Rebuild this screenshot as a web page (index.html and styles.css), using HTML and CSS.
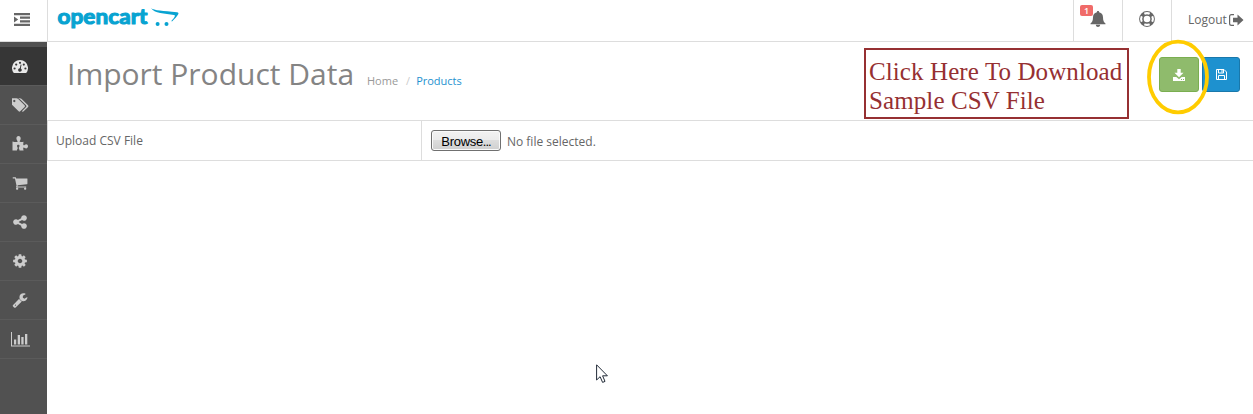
FILE: index.html
```
<!DOCTYPE html>
<html lang="en">
<head>
<meta charset="utf-8">
<title>Import Product Data</title>
<link rel="stylesheet" href="styles.css">
</head>
<body>
<header class="topbar">
  <div class="toggle">
    <svg width="16" height="13" viewBox="0 0 16 13"><path d="M0 0h16v2.300H0zM6 3.600h10v2.200H6zM6 7.200h10v2.200H6zM0 10.700h16V13H0zM0 3.400l4.200 3.100L0 9.600z"/></svg>
  </div>
  <div class="brand">
    <svg width="126" height="32" viewBox="0 0 126 32">
      <text class="logo-text" x="0.500" y="24" textLength="90" lengthAdjust="spacingAndGlyphs">opencart</text>
      <path d="M94 8C97 10.800 106 10.600 120 12.200C123 12.600 121.500 15 115 21.500L114.300 21C117.500 17.500 119 15.400 117 15C108 13.400 97 13.500 94 8z"/>
      <circle cx="100.600" cy="24" r="2"/><circle cx="109.500" cy="24" r="2"/>
    </svg>
  </div>
  <nav class="actions">
    <div class="action bell">
      <svg width="16" height="16" viewBox="0 0 16 16"><path d="M8 0c.8 0 1.200.500 1.100 1.300C11.700 1.900 13 3.800 13 6.200c0 3.300.900 5 2.500 6.300v.800H.5v-.800C2.100 11.200 3 9.500 3 6.200 3 3.800 4.300 1.900 6.900 1.300 6.800.500 7.200 0 8 0zM5.800 13.800h4.400C10 15.200 9.200 16 8 16s-2-.8-2.200-2.200z"/></svg>
      <span class="badge">1</span>
    </div>
    <div class="action help">
      <svg width="16" height="16" viewBox="0 0 16 16"><circle cx="8" cy="8" r="5.600" fill="none" stroke="#666" stroke-width="4.600"/><g fill="none" stroke="#fff" stroke-width="2.500"><path d="M4.800 1.700a7 7 0 0 1 6.400 0M4.800 14.300a7 7 0 0 0 6.400 0M1.700 4.800a7 7 0 0 0 0 6.400M14.300 4.800a7 7 0 0 1 0 6.400" transform="translate(8 8) scale(.83) translate(-8 -8)"/></g></svg>
    </div>
    <div class="action logout"><span>Logout</span>
      <svg width="15" height="12" viewBox="0 0 15 12"><path d="M5 .6H2.500Q.6.600.6 2.500v7q0 1.900 1.900 1.900H5" fill="none" stroke="#666" stroke-width="1.200"/><path d="M4 3.800h4.500V.500L14.500 6l-6 5.500V8.200H4z"/></svg>
    </div>
  </nav>
</header>
<div class="shell">
  <aside class="sidebar">
    <div class="item active"><svg width="16" height="13" viewBox="0 0 16 13"><path d="M1.600 12.800A8 8 0 1 1 14.400 12.800Q14.200 13 13.800 13H2.200Q1.800 13 1.600 12.800z"/><g fill="#363636"><circle cx="2.600" cy="8.500" r="1.100"/><circle cx="4.200" cy="4.600" r="1.100"/><circle cx="8" cy="2.800" r="1.100"/><circle cx="11.800" cy="4.600" r="1.100"/><circle cx="13.400" cy="8.500" r="1.100"/><path d="M8.700 4.500l.8.200-.7 3.700a1.800 1.800 0 1 1-1-.200z"/></g></svg></div>
    <div class="item"><svg width="17" height="16" viewBox="0 0 1904 1792"><path d="M384 448q0-53-37.500-90.500t-90.500-37.500-90.500 37.500-37.500 90.500 37.500 90.500 90.500 37.500 90.500-37.500 37.500-90.500zm1067 576q0 53-37 90l-491 492q-39 37-91 37-53 0-90-37l-715-716q-38-37-64.500-101t-26.500-117v-416q0-52 38-90t90-38h416q53 0 117 26.500t102 64.500l715 714q37 39 37 91zm384 0q0 53-37 90l-491 492q-39 37-91 37-36 0-59-14t-53-45l470-470q37-37 37-90 0-52-37-91l-715-714q-38-38-102-64.500t-117-26.500h224q53 0 117 26.500t102 64.500l715 714q37 39 37 91z"/></svg></div>
    <div class="item"><svg width="16" height="16" viewBox="0 1 16 16"><path d="M.5 6.500C2.500 7 5 7.300 5.600 6.700 6 6 4.400 5.200 4.400 3.500 4.400 2 5.200 1 6.500 1s2.200 1 2.200 2.400C8.700 5 7.400 5.800 7.600 6.600c.3.700 2.500.300 3.900.1-.2 1.500-.5 3.200.1 3.600.8.400 1.300-1 2.600-1 1 0 1.800.8 1.800 2s-.8 2.100-1.900 2.100c-1.200 0-1.800-1.200-2.500-.9-.7.300-.3 1.800 0 3.100H7.500c.2-1.300-.7-1.600-.7-2.700 0-.9.700-1.300.7-2 0-.8-.5-1.100-1.200-1.100s-1.300.4-1.300 1.100c0 .8.700 1.200.7 2 0 1.100-.8 1.400-.8 2.700H.5z"/></svg></div>
    <div class="item"><svg width="16" height="16" viewBox="0 0 1792 1792"><path d="M704 1536q0 52-38 90t-90 38-90-38-38-90 38-90 90-38 90 38 38 90zm896 0q0 52-38 90t-90 38-90-38-38-90 38-90 90-38 90 38 38 90zm128-1088v512q0 24-16.500 42.500t-40.500 21.500l-1044 122q13 60 13 70 0 16-24 64h920q26 0 45 19t19 45-19 45-45 19h-1024q-26 0-45-19t-19-45q0-11 8-31.500t16-36 21.500-40 15.500-29.500l-177-823h-204q-26 0-45-19t-19-45 19-45 45-19h256q16 0 28.500 6.500t19.500 15.500 13 24.500 8 26 5.500 29.500 4.500 26h1201q26 0 45 19t19 45z"/></svg></div>
    <div class="item"><svg width="16" height="16" viewBox="64 0 1664 1792"><path d="M1344 1024q133 0 226.500 93.500t93.500 226.500-93.500 226.500-226.500 93.500-226.500-93.500-93.500-226.500q0-12 2-34l-360-180q-92 86-218 86-133 0-226.500-93.500t-93.500-226.500 93.500-226.500 226.500-93.500q126 0 218 86l360-180q-2-22-2-34 0-133 93.500-226.500t226.500-93.500 226.500 93.500 93.500 226.500-93.500 226.500-226.500 93.500q-126 0-218-86l-360 180q2 22 2 34t-2 34l360 180q92-86 218-86z"/></svg></div>
    <div class="item"><svg width="16" height="16" viewBox="0 0 1792 1792"><path d="M1152 896q0-106-75-181t-181-75-181 75-75 181 75 181 181 75 181-75 75-181zm512-109v222q0 12-8 23t-20 13l-185 28q-19 54-39 91 35 50 107 138 10 12 10 25t-9 23q-27 37-99 108t-94 71q-12 0-26-9l-138-108q-44 23-91 38-16 136-29 186-7 28-36 28h-222q-14 0-24.500-8.500t-11.500-21.500l-28-184q-49-16-90-37l-141 107q-10 9-25 9-14 0-25-11-126-114-165-168-7-10-7-23 0-12 8-23 15-21 51-66.500t54-70.500q-27-50-41-99l-183-27q-13-2-21-12.500t-8-23.500v-222q0-12 8-23t19-13l186-28q14-46 39-92-40-57-107-138-10-12-10-24 0-10 9-23 26-36 98.500-107.500t94.500-71.500q13 0 26 10l138 107q44-23 91-38 16-136 29-186 7-28 36-28h222q14 0 24.500 8.500t11.500 21.500l28 184q49 16 90 37l142-107q9-9 24-9 13 0 25 10 129 119 165 170 7 8 7 22 0 12-8 23-15 21-51 66.500t-54 70.500q26 50 41 98l183 28q13 2 21 12.500t8 23.500z"/></svg></div>
    <div class="item"><svg width="16" height="16" viewBox="0 0 1792 1792"><path d="M448 1472q0-26-19-45t-45-19-45 19-19 45 19 45 45 19 45-19 19-45zm644-420l-682 682q-37 37-90 37-52 0-91-37l-106-108q-38-36-38-90 0-53 38-91l681-681q39 98 114.500 173.500t173.500 114.500zm634-435q0 39-23 106-47 134-164.500 217.500t-258.500 83.500q-185 0-316.500-131.500t-131.500-316.500 131.500-316.500 316.500-131.500q58 0 121.500 16.500t107.500 46.500q16 11 16 28t-16 28l-293 169v224l193 107q5-3 79-48.500t135.500-81 70.500-35.500q15 0 23.500 10t8.500 25z"/></svg></div>
    <div class="item"><svg width="19" height="15" viewBox="0 0 19 15"><path d="M0 0h1v13.500h18v1H0zM3 7.500h2.200v5H3zM6.700 3h2.300v9.500H6.700zM10.300 5h2.300v7.500h-2.300zM14 2h2.300v10.500H14z"/></svg></div>
  </aside>
  <main class="content">
    <div class="page-header">
      <h1>Import Product Data</h1>
      <div class="crumbs"><span>Home</span><span class="sep">/</span><a>Products</a></div>
      <div class="note">Click Here To Download<br>Sample CSV File</div>
      <div class="buttons">
        <div class="btn green"><svg width="12" height="12" viewBox="0 0 12 12"><path d="M4.300 0h3.400v3.800H10.500L6 8.300 1.500 3.800h2.800zM0 8h3.300L6 10.200 8.700 8H12v4H0z"/><path d="M8 10h1v1H8zM10 10h1v1h-1z" fill="#8fbb6c"/></svg>
          <svg class="ring" width="62" height="76" viewBox="0 0 62 76"><ellipse cx="31" cy="38" rx="29" ry="35.300" fill="none" stroke="#fc0" stroke-width="3.800"/></svg>
        </div>
        <div class="btn blue"><svg width="11" height="11" viewBox="0 0 11 11" fill="none" stroke="#fff" stroke-width="1"><path d="M.5.5h7.500l2.500 2.500v7.500H.5zM2.500.5v3.500h5V.5M2.500 10.500v-4h6v4M6 1v2.500"/></svg></div>
      </div>
    </div>
    <div class="row">
      <div class="label">Upload CSV File</div>
      <div class="field"><button class="browse">Browse<span class="dots">...</span></button><span class="status">No file selected.</span></div>
    </div>
  </main>
</div>
<svg class="cursor" width="13" height="20" viewBox="0 0 13 20"><path d="M.6.800v15.200l3.500-3.300 2.500 5.700 2.400-1-2.400-5.600h4.800z" fill="#fff" stroke="#222b38" stroke-width="1"/></svg>
</body>
</html>
```
FILE: styles.css
```
* { box-sizing: border-box; }
body {
  margin: 0;
  height: 414px;
  overflow: hidden;
  background: #fff;
  color: #666;
  font: 12px "Open Sans", sans-serif;
  display: flex;
  flex-direction: column;
}
svg { display: block; fill: #666; flex: none; }
.topbar { display: flex; height: 42px; flex: none; border-bottom: 1px solid #ddd; }
.toggle { width: 48px; border-right: 1px solid #ddd; padding: 13px 0 0 14px; }
.brand { padding-left: 9px; }
.brand svg { fill: #08a3d1; overflow: visible; }
.logo-text {
  font: bold 21.5px Lato, sans-serif;
  stroke: #08a3d1;
  stroke-width: 1.1;
  stroke-linejoin: round;
}
.actions { display: flex; margin-left: auto; }
.action { width: 49px; border-left: 1px solid #ddd; padding: 11px 0 0 16px; position: relative; }
.logout { width: 82px; height: 39px; display: flex; gap: 2px; padding: 0 0 0 16px; align-items: center; line-height: 17px; border-left: 0; }
.help { border-right: 1px solid #ddd; width: 50px; }
.logout { width: 81px; }
.badge {
  position: absolute;
  left: 6px;
  top: 5px;
  width: 13px;
  height: 11px;
  border-radius: 2px;
  background: #f06b69;
  color: #fff;
  font-size: 9px;
  font-weight: 600;
  line-height: 11px;
  text-align: center;
}
.shell { display: flex; flex: 1; min-height: 0; }
.sidebar { width: 47px; flex: none; background: #515151; padding-top: 5px; }
.sidebar svg { fill: #ccc; }
.item {
  height: 39px;
  border-bottom: 1px solid #5b5b5b;
  display: flex;
  align-items: center;
  padding-left: 12px;
}
.item:last-child { padding-left: 11px; }
.active { background: #363636; }
.active svg { fill: #e8e8e8; }
.content { flex: 1; min-width: 0; }
.page-header { display: flex; height: 79px; border-bottom: 1px solid #ddd; padding-left: 20px; }
h1 { margin: 11px 0 0; width: 300px; color: #848484; font-size: 30px; font-weight: 400; line-height: 42px; white-space: nowrap; }
.crumbs { padding-top: 30px; line-height: 17px; font-size: 11px; color: #999; display: flex; }
.sep { color: #ccc; padding: 0 6px 0 8px; }
.crumbs a { color: #1e91cf; }
.note {
  margin: 6px 30px 0 auto;
  width: 265px;
  height: 71px;
  border: 2px solid #963032;
  padding: 7px 0 0 3px;
  color: #963032;
  font: 25px/29px "Liberation Serif", serif;
  letter-spacing: .1px;
  white-space: nowrap;
}
.buttons { display: flex; gap: 3px; padding: 15px 13px 0 0; }
.btn { position: relative; height: 35px; border-radius: 3px; display: flex; align-items: center; justify-content: center; }
.btn svg { fill: #fff; }
.green { width: 40px; background: #8fbb6c; border: 1px solid #7aae50; z-index: 1; }
.blue { width: 38px; background: #1e91cf; border: 1px solid #1978ab; }
.btn.blue svg { fill: none; }
.btn svg.ring { position: absolute; left: -13px; top: -19px; fill: none; }
.row { display: flex; height: 40px; border-bottom: 1px solid #ddd; border-left: 1px solid #ddd; }
.label { width: 373px; padding: 11px 0 0 8px; line-height: 17px; }
.field { flex: 1; border-left: 1px solid #ddd; display: flex; padding-left: 9px; align-items: center; gap: 6px; }
.browse {
  width: 70px;
  height: 21px;
  padding: 1px 0 0;
  border: 1px solid #707070;
  border-radius: 3px;
  background: linear-gradient(#f2f2f2, #ebebeb 50%, #ddd 50%, #cfcfcf);
  box-shadow: inset 0 0 0 1px #fafafa;
  color: #000;
  font: 13px "Liberation Sans", sans-serif;
  letter-spacing: -.3px;
}
.dots { letter-spacing: -1px; }
.status { line-height: 17px; padding-top: 2px; }
.cursor { position: absolute; left: 596px; top: 364px; }
```
